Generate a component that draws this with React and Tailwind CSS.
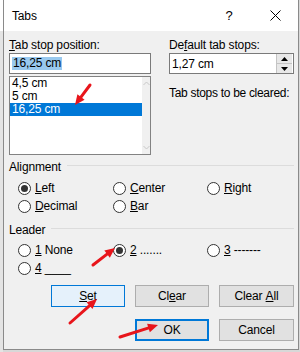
import React from "react";

function Radio({ checked, children }) {
  return (
    <div className="flex items-center h-[18px]">
      <span className="w-[13px] h-[13px] rounded-full border border-[#333333] bg-white flex items-center justify-center shrink-0">
        {checked && <span className="w-[7px] h-[7px] rounded-full bg-[#333333]" />}
      </span>
      <span className="ml-[4px] whitespace-pre">{children}</span>
    </div>
  );
}

function Btn({ children, variant, w }) {
  const base =
    "h-[22px] flex items-center justify-center text-[12px] text-black whitespace-pre";
  if (variant === "set")
    return (
      <div className={base + " w-[74px] bg-[#e5f1fb] border border-[#0078d7]"}>{children}</div>
    );
  if (variant === "ok")
    return (
      <div className={base + " w-[74px] bg-[#e1e1e1] border-2 border-[#0078d7]"}>{children}</div>
    );
  return (
    <div className={base + " " + (w || "w-[74px]") + " bg-[#e1e1e1] border border-[#adadad]"}>
      {children}
    </div>
  );
}

function GroupLabel({ children }) {
  return (
    <div className="flex items-center h-[16px]">
      <span>{children}</span>
      <span className="flex-1 h-px bg-[#dcdcdc] ml-[6px] -mt-[3px]" />
    </div>
  );
}

function Arrow({ x1, y1, x2, y2 }) {
  const dx = x2 - x1;
  const dy = y2 - y1;
  const len = Math.sqrt(dx * dx + dy * dy);
  const ux = dx / len;
  const uy = dy / len;
  const hl = 10;
  const hw = 4.5;
  const bx = x2 - ux * hl;
  const by = y2 - uy * hl;
  const p1 = `${x2},${y2}`;
  const p2 = `${bx - uy * hw},${by + ux * hw}`;
  const p3 = `${bx + uy * hw},${by - ux * hw}`;
  return (
    <g>
      <line x1={x1} y1={y1} x2={bx + ux * 2} y2={by + uy * 2} stroke="#e8151b" strokeWidth="3" strokeLinecap="round" />
      <polygon points={`${p1} ${p2} ${p3}`} fill="#e8151b" />
    </g>
  );
}

export default function App() {
  return (
    <div className="relative w-[300px] h-[352px] overflow-hidden bg-[#d8d8d8] flex font-['Liberation_Sans',Arial,sans-serif] text-[12px] tracking-[-0.15px] text-black leading-[16px]">
      {/* left strip outside dialog */}
      <div className="w-[3px] flex flex-col">
        <div className="h-[31px] bg-white" />
        <div className="flex-1 bg-[#e4e4e4]" />
      </div>

      {/* dialog */}
      <div className="w-[296px] h-[350px] border-l border-r border-b border-[#8a8a8a] flex flex-col bg-[#f0f0f0]">
        {/* title bar */}
        <div className="h-[31px] bg-white flex items-center shrink-0">
          <span className="pl-[8px] text-[12px]">Tabs</span>
          <div className="ml-auto flex h-full">
            <div className="w-[46px] h-full flex items-center justify-center text-[13px]">?</div>
            <div className="w-[46px] h-full flex items-center justify-center">
              <svg width="11" height="11" viewBox="0 0 11 11">
                <path d="M0.5 0.5 L10.5 10.5 M10.5 0.5 L0.5 10.5" stroke="#000" strokeWidth="1" fill="none" />
              </svg>
            </div>
          </div>
        </div>

        {/* body */}
        <div className="flex flex-col pl-[5px] pr-[4px] pt-[6px]">
          {/* top row */}
          <div className="grid grid-cols-[142px_125px] gap-x-[18px]">
            <div className="flex flex-col">
              <div className="h-[16px] whitespace-nowrap">
                <u>T</u>ab stop position:
              </div>
              <div className="h-[21px] border border-[#7a7a7a] bg-white flex items-center pl-[2px]">
                <span className="bg-[#99c9ef] px-[1px] leading-[13px]">16,25 cm</span>
              </div>
              <div className="mt-[2px] h-[79px] border border-[#828282] bg-white flex">
                <div className="flex-1 flex flex-col">
                  <div className="h-[13px] leading-[13px] pl-[2px]">4,5 cm</div>
                  <div className="h-[13px] leading-[13px] pl-[2px]">5 cm</div>
                  <div className="h-[13px] leading-[13px] pl-[2px] bg-[#0078d7] text-white">16,25 cm</div>
                </div>
                <div className="w-[8px] bg-[#f0f0f0] flex flex-col justify-between items-center py-[4px]">
                  <svg width="7" height="5" viewBox="0 0 7 5">
                    <path d="M0.5 4 L3.5 1 L6.5 4" stroke="#c8c8c8" fill="none" />
                  </svg>
                  <svg width="7" height="5" viewBox="0 0 7 5">
                    <path d="M0.5 1 L3.5 4 L6.5 1" stroke="#c8c8c8" fill="none" />
                  </svg>
                </div>
              </div>
            </div>
            <div className="flex flex-col">
              <div className="h-[16px] whitespace-nowrap">
                De<u>f</u>ault tab stops:
              </div>
              <div className="h-[21px] border border-[#7a7a7a] bg-white flex items-center">
                <span className="pl-[2px] flex-1">1,27 cm</span>
                <div className="w-[16px] h-full flex flex-col border-l border-[#c4c4c4] mr-[1px]">
                  <div className="flex-1 bg-[#e8e8e8] border-b border-[#c4c4c4] flex items-center justify-center">
                    <svg width="7" height="4" viewBox="0 0 7 4">
                      <path d="M0 4 L3.5 0 L7 4 Z" fill="#000" />
                    </svg>
                  </div>
                  <div className="flex-1 bg-[#e8e8e8] flex items-center justify-center">
                    <svg width="7" height="4" viewBox="0 0 7 4">
                      <path d="M0 0 L3.5 4 L7 0 Z" fill="#000" />
                    </svg>
                  </div>
                </div>
              </div>
              <div className="mt-[11px] h-[16px] whitespace-nowrap tracking-[-0.3px]">Tab stops to be cleared:</div>
            </div>
          </div>

          {/* Alignment */}
          <div className="mt-[4px]">
            <GroupLabel>Alignment</GroupLabel>
          </div>
          <div className="mt-[4px] pl-[9px] grid grid-cols-[95px_94px_1fr]">
            <Radio checked>
              <u>L</u>eft
            </Radio>
            <Radio>
              <u>C</u>enter
            </Radio>
            <Radio>
              <u>R</u>ight
            </Radio>
            <Radio>
              <u>D</u>ecimal
            </Radio>
            <Radio>
              <u>B</u>ar
            </Radio>
          </div>

          {/* Leader */}
          <div className="mt-[7px]">
            <GroupLabel>Leader</GroupLabel>
          </div>
          <div className="mt-[3px] pl-[9px] grid grid-cols-[95px_94px_1fr]">
            <Radio>
              <u>1</u> None
            </Radio>
            <Radio checked>
              <u>2</u> .......
            </Radio>
            <Radio>
              <u>3</u> -------
            </Radio>
            <Radio>
              <u>4</u> ____
            </Radio>
          </div>

          {/* buttons */}
          <div className="mt-[8px] flex justify-end gap-[10px]">
            <Btn variant="set">
              <u>S</u>et
            </Btn>
            <Btn>
              Cl<u>e</u>ar
            </Btn>
            <Btn w="w-[75px]">
              <span>Clear&nbsp;<u>A</u>ll</span>
            </Btn>
          </div>
          <div className="mt-[12px] flex justify-end gap-[10px]">
            <Btn variant="ok">OK</Btn>
            <Btn w="w-[75px]">Cancel</Btn>
          </div>
        </div>
      </div>

      {/* annotation arrows */}
      <svg className="absolute inset-0 pointer-events-none" width="300" height="352" viewBox="0 0 300 352">
        <Arrow x1={90} y1={85} x2={75} y2={105} />
        <Arrow x1={93} y1={265} x2={115} y2={248} />
        <Arrow x1={70} y1={323} x2={97} y2={299} />
        <Arrow x1={120} y1={337} x2={158} y2={325} />
      </svg>
    </div>
  );
}
